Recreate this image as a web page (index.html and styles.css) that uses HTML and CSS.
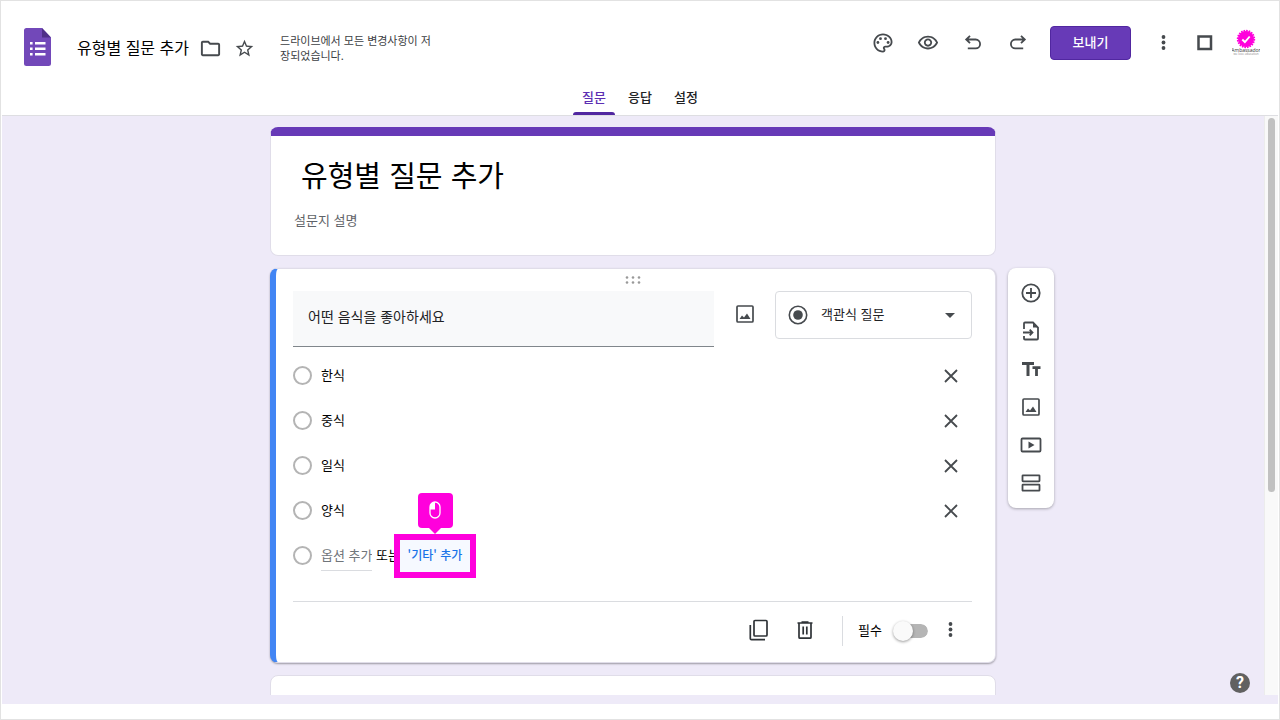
FILE: index.html
```html
<!DOCTYPE html>
<html lang="ko">
<head>
<meta charset="utf-8">
<meta name="viewport" content="width=device-width, initial-scale=1">
<title>유형별 질문 추가</title>
<link rel="stylesheet" href="styles.css">
</head>
<body>
<header class="header">
  <div class="topbar">
    <div class="doc">
      <svg class="logo" viewBox="0 0 27 38" aria-hidden="true">
        <path d="M2.500 0H18l9 9.500V35.500a2.500 2.500 0 0 1-2.500 2.500h-22A2.500 2.500 0 0 1 0 35.500v-33A2.500 2.500 0 0 1 2.500 0z" fill="#7248b9"/>
        <path d="M18 0l9 9.500h-9z" fill="#4f2f88"/>
        <path d="M11 14h10.500v2.500H11zM11 19.500h10.500V22H11zM11 25h10.500v2.500H11zM6 14h2.600v2.500H6zM6 19.500h2.600V22H6zM6 25h2.600v2.500H6z" fill="#fff"/>
      </svg>
      <h1 class="doc-name">유형별 질문 추가</h1>
      <button class="plain" aria-label="이동"><svg class="i23" viewBox="0 0 24 24"><path d="M9.170 6l2 2H20v10H4V6h5.170M10 4H4c-1.100 0-2 .9-2 2v12c0 1.100.9 2 2 2h16c1.100 0 2-.9 2-2V8c0-1.100-.9-2-2-2h-8l-2-2z"/></svg></button>
      <button class="plain star" aria-label="별표"><svg class="i21" viewBox="0 0 24 24"><path d="M22 9.240l-7.190-.62L12 2 9.190 8.630 2 9.240l5.460 4.730L5.820 21 12 17.270 18.180 21l-1.630-7.030L22 9.240zM12 15.400l-3.760 2.270 1-4.280-3.320-2.880 4.380-.38L12 6.100l1.710 4.040 4.380.38-3.320 2.880 1 4.280L12 15.400z"/></svg></button>
      <p class="status">드라이브에서 모든 변경사항이 저장되었습니다.</p>
    </div>
    <div class="actions">
      <button class="icon-btn" aria-label="테마 맞춤설정"><svg class="i24" viewBox="0 0 24 24"><path d="M12 21.500C6.760 21.500 2.500 17.240 2.500 12S6.760 2.500 12 2.500s9.500 3.820 9.500 8.500c0 3-2.500 5.500-5.500 5.500h-1.800c-.3 0-.5.2-.5.5 0 .1.050.2.130.3.400.5.650 1.080.650 1.700 0 1.400-1.100 2.500-2.480 2.500zM12 4.300c-4.240 0-7.700 3.450-7.700 7.700s3.460 7.700 7.700 7.700c.4 0 .65-.3.650-.7 0-.2-.1-.36-.17-.44-.4-.46-.62-1.020-.62-1.610 0-1.300 1.050-2.250 2.350-2.250H16c2.050 0 3.700-1.660 3.700-3.700 0-3.700-3.460-6.700-7.700-6.700z"/><circle cx="6.900" cy="11.500" r="1.400"/><circle cx="9.500" cy="7.700" r="1.400"/><circle cx="14.500" cy="7.700" r="1.400"/><circle cx="17.100" cy="11.500" r="1.400"/></svg></button>
      <button class="icon-btn" aria-label="미리보기"><svg class="i22" viewBox="0 0 24 24"><path d="M12 6c3.790 0 7.170 2.130 8.820 5.500C19.170 14.870 15.790 17 12 17s-7.170-2.130-8.820-5.500C4.830 8.130 8.210 6 12 6m0-2C7 4 2.730 7.110 1 11.500 2.730 15.890 7 19 12 19s9.270-3.110 11-7.500C21.270 7.110 17 4 12 4zm0 5c1.380 0 2.500 1.120 2.500 2.500S13.380 14 12 14s-2.500-1.120-2.500-2.500S10.620 9 12 9m0-2c-2.480 0-4.500 2.020-4.500 4.500S9.520 16 12 16s4.500-2.020 4.500-4.500S14.480 7 12 7z"/></svg></button>
      <button class="icon-btn" aria-label="실행취소"><svg class="i22 line" viewBox="0 0 22 22"><path d="M8 3.800L4.200 7.500 8 11.200M4.500 7.500h9.200a4.400 4.400 0 0 1 0 8.800H5.800"/></svg></button>
      <button class="icon-btn" aria-label="재실행"><svg class="i22 line" viewBox="0 0 22 22"><path d="M14 3.800l3.800 3.700-3.800 3.700M17.500 7.500H8.300a4.400 4.400 0 0 0 0 8.800h7.900"/></svg></button>
      <button class="send">보내기</button>
      <button class="icon-btn small" aria-label="더보기"><svg class="i22" viewBox="0 0 22 22"><circle cx="10.500" cy="5" r="1.900"/><circle cx="10.500" cy="10.500" r="1.900"/><circle cx="10.500" cy="16" r="1.900"/></svg></button>
      <button class="icon-btn small" aria-label="앱"><svg class="i22" viewBox="0 0 22 22"><path d="M4.500 4.500h12.500v12.500H4.500z" fill="none" stroke="#464a4e" stroke-width="2.500"/></svg></button>
      <button class="avatar" aria-label="Google 계정">
        <svg viewBox="0 0 28 28">
          <circle cx="14" cy="10" r="8" fill="#ff00dc"/>
          <circle cx="14" cy="10" r="8.300" fill="none" stroke="#ff00dc" stroke-width="1.800" stroke-dasharray="1.600 1"/>
          <path d="M10.300 10.500l2.600 2.500 4.800-5.500" fill="none" stroke="#fff" stroke-width="1.900"/>
          <text class="avatar-name" x="14" y="23" text-anchor="middle">Ambassador</text>
          <text class="avatar-sub" x="14" y="26" text-anchor="middle">we love education</text>
        </svg>
      </button>
    </div>
  </div>
  <nav class="tabs">
    <a class="tab active" href="#questions">질문</a>
    <a class="tab" href="#responses">응답</a>
    <a class="tab" href="#settings">설정</a>
  </nav>
</header>

<main class="workspace">
  <div class="viewport">
    <div class="canvas" id="questions">
      <section class="card intro">
        <h2 class="form-title">유형별 질문 추가</h2>
        <p class="form-desc">설문지 설명</p>
      </section>

      <section class="card question">
        <svg class="grip" viewBox="0 0 16 8" aria-hidden="true"><circle cx="2" cy="1.500" r="1.300"/><circle cx="8" cy="1.500" r="1.300"/><circle cx="14" cy="1.500" r="1.300"/><circle cx="2" cy="6.500" r="1.300"/><circle cx="8" cy="6.500" r="1.300"/><circle cx="14" cy="6.500" r="1.300"/></svg>
        <div class="question-head">
          <input class="question-text" type="text" value="어떤 음식을 좋아하세요" aria-label="질문">
          <button class="image-btn" aria-label="이미지 추가"><svg class="i22" viewBox="0 0 22 22"><rect x="3" y="3" width="16" height="16" rx="1" fill="none" stroke="#464a4e" stroke-width="1.700"/><path d="M5.500 16l2.500-3.500 2 2 3-4 3.500 5.500z"/></svg></button>
          <div class="type">
            <svg class="type-icon" viewBox="0 0 20 20" aria-hidden="true"><circle cx="10" cy="10" r="8.700" fill="none" stroke="#464a4e" stroke-width="1.600"/><circle cx="10" cy="10" r="4.800"/></svg>
            <select class="type-select" aria-label="질문 유형"><option>객관식 질문</option></select>
            <svg class="type-arrow" viewBox="0 0 10 5" aria-hidden="true"><path d="M0 0h10L5 5z"/></svg>
          </div>
        </div>

        <ul class="options">
          <li class="option">
            <input class="radio" type="radio" name="food" id="o1"><label for="o1">한식</label>
            <button class="row-btn" aria-label="한식 삭제"><svg class="i22 line" viewBox="0 0 22 22"><path d="M5 5l12 12M17 5L5 17"/></svg></button>
          </li>
          <li class="option">
            <input class="radio" type="radio" name="food" id="o2"><label for="o2">중식</label>
            <button class="row-btn" aria-label="중식 삭제"><svg class="i22 line" viewBox="0 0 22 22"><path d="M5 5l12 12M17 5L5 17"/></svg></button>
          </li>
          <li class="option">
            <input class="radio" type="radio" name="food" id="o3"><label for="o3">일식</label>
            <button class="row-btn" aria-label="일식 삭제"><svg class="i22 line" viewBox="0 0 22 22"><path d="M5 5l12 12M17 5L5 17"/></svg></button>
          </li>
          <li class="option">
            <input class="radio" type="radio" name="food" id="o4"><label for="o4">양식</label>
            <button class="row-btn" aria-label="양식 삭제"><svg class="i22 line" viewBox="0 0 22 22"><path d="M5 5l12 12M17 5L5 17"/></svg></button>
          </li>
          <li class="option">
            <input class="radio" type="radio" name="food" aria-label="새 옵션">
            <input class="add-option" type="text" placeholder="옵션 추가" aria-label="옵션 추가">
            <span class="or">또는</span>
            <div class="other">
              <button class="other-btn">'기타' 추가</button>
              <span class="highlight"></span>
              <span class="callout">
                <svg viewBox="0 0 12 18" aria-hidden="true"><rect x="1" y="1" width="10" height="16" rx="5" fill="none" stroke="#fff" stroke-width="1.300"/><path d="M6 1v7.500H1V6a5 5 0 0 1 5-5z" fill="#fff"/></svg>
              </span>
            </div>
          </li>
        </ul>

        <div class="question-foot">
          <button class="foot-btn" aria-label="사본 만들기"><svg class="i22" viewBox="0 0 22 22"><g fill="none" stroke="#2f3337" stroke-width="1.700"><rect x="6" y="1.500" width="13" height="15.500" rx="1"/><path d="M2.300 6v13.500a1.200 1.200 0 0 0 1.200 1.200H17"/></g></svg></button>
          <button class="foot-btn" aria-label="삭제"><svg class="i22" viewBox="0 0 22 22"><g fill="none" stroke="#2f3337" stroke-width="1.700"><path d="M5 4.500v13.700a1 1 0 0 0 1 1h10a1 1 0 0 0 1-1V4.500M3.500 4h15M7.500 3h7M9.200 7.500v8M12.800 7.500v8"/></g></svg></button>
          <label class="required"><span>필수</span><input class="toggle" type="checkbox"></label>
          <button class="row-btn" aria-label="옵션 더보기"><svg class="i22" viewBox="0 0 22 22"><circle cx="10.500" cy="5" r="1.900"/><circle cx="10.500" cy="10.500" r="1.900"/><circle cx="10.500" cy="16" r="1.900"/></svg></button>
        </div>
      </section>

      <aside class="tools">
        <button aria-label="질문 추가"><svg class="i22 line" viewBox="0 0 22 22"><circle cx="11" cy="11" r="8.700"/><path d="M11 6v10M6 11h10"/></svg></button>
        <button aria-label="질문 가져오기"><svg class="i22 line" viewBox="0 0 22 22"><path d="M4 9V3.500a1 1 0 0 1 1-1h8l5 5v11a1 1 0 0 1-1 1H5a1 1 0 0 1-1-1V16M3 12.500h9M9.700 9.700l2.800 2.800-2.800 2.800"/><path d="M13 2.500v5h5z" fill="#464a4e" stroke="none"/></svg></button>
        <button aria-label="제목 및 설명 추가"><svg class="i22" viewBox="0 0 22 22"><path d="M2 4h12v2.900H9.500V18H6.500V6.900H2zM12.500 8.300H20.500V11h-2.600v7h-2.800v-7h-2.600z"/></svg></button>
        <button aria-label="이미지 추가"><svg class="i22" viewBox="0 0 22 22"><rect x="3" y="3" width="16" height="16" rx="1" fill="none" stroke="#464a4e" stroke-width="1.700"/><path d="M5.500 16l2.500-3.500 2 2 3-4 3.500 5.500z"/></svg></button>
        <button aria-label="동영상 추가"><svg class="i22 line" viewBox="0 0 22 22"><rect x="1.500" y="4.500" width="19" height="13" rx="1"/><path d="M8.500 7.500v7l6-3.500z" fill="#464a4e" stroke="none"/></svg></button>
        <button aria-label="섹션 추가"><svg class="i22 line" viewBox="0 0 22 22"><rect x="2.500" y="3.300" width="17" height="6" rx=".5"/><rect x="2.500" y="12.700" width="17" height="6" rx=".5"/></svg></button>
      </aside>

      <section class="card next"></section>
    </div>
    <div class="scrollbar"><div class="thumb"></div></div>
  </div>
  <button class="help" aria-label="도움말">?</button>
</main>
</body>
</html>
```

FILE: styles.css
```css
* {
  box-sizing: border-box;
}

body {
  margin: 0;
  height: 100vh;
  padding: 0 1px 15px;
  border: 1px solid #e2e2e2;
  display: flex;
  flex-direction: column;
  overflow: hidden;
  background: #fff;
  color: #202124;
  font-family: "Noto Sans CJK KR", sans-serif;
  font-size: 13px;
  line-height: 20px;
}

h1, h2, p, ul {
  margin: 0;
  padding: 0;
  font-weight: 400;
}

button, input, select {
  margin: 0;
  padding: 0;
  border: 0;
  background: none;
  color: inherit;
  font: inherit;
}

button {
  display: flex;
  align-items: center;
  justify-content: center;
  cursor: pointer;
}

svg {
  display: block;
  fill: #464a4e;
}

.line {
  fill: none;
  stroke: #464a4e;
  stroke-width: 1.8;
}

.i21 { width: 21px; height: 21px; }
.i22 { width: 22px; height: 22px; }
.i23 { width: 23px; height: 23px; }
.i24 { width: 24px; height: 24px; }

/* Header */

.header {
  flex: none;
  border-bottom: 1px solid #dedee2;
}

.topbar {
  display: flex;
  justify-content: space-between;
  height: 78px;
  padding: 0 18px 0 22px;
}

.doc {
  display: flex;
  align-items: center;
  padding-top: 16px;
}

.logo {
  width: 27px;
  height: 38px;
  margin: 0 26px 2px 0;
}

.doc-name {
  margin: 0 10px 2px 0;
  font-size: 16px;
  line-height: 24px;
  color: #000;
}

.star {
  margin-left: 12px;
}

.status {
  width: 154px;
  margin-left: 25px;
  font-size: 11px;
  line-height: 15px;
  color: #3c4043;
}

.actions {
  display: flex;
  align-items: center;
  padding-top: 6px;
}

.icon-btn {
  width: 45px;
  height: 40px;
}

.icon-btn.small {
  width: 41px;
}

.send {
  width: 81px;
  height: 34px;
  margin: 0 12px 0 10px;
  padding-bottom: 2px;
  border: 1px solid #5127a0;
  border-radius: 4px;
  background: #673ab7;
  color: #fff;
  font-weight: 500;
}

.avatar {
  width: 28px;
  height: 28px;
  margin-left: 7px;
}

.avatar svg {
  width: 28px;
  height: 28px;
}

.avatar-name {
  font: 5px "Open Sans", sans-serif;
  fill: #333;
}

.avatar-sub {
  font: 3px "Open Sans", sans-serif;
  fill: #888;
}

.tabs {
  display: flex;
  justify-content: center;
  gap: 4px;
  height: 36px;
}

.tab {
  width: 42px;
  padding-top: 8px;
  text-align: center;
  text-decoration: none;
  font-weight: 500;
  color: #202124;
  position: relative;
}

.tab.active {
  color: #5d2fb3;
}

.tab.active::after {
  content: "";
  position: absolute;
  right: 0;
  bottom: 0;
  left: 0;
  height: 3px;
  border-radius: 3px 3px 0 0;
  background: #5127a0;
}

/* Workspace */

.workspace {
  flex: 1;
  min-height: 0;
  display: flex;
  flex-direction: column;
  padding-bottom: 9px;
  position: relative;
  background: #eeeaf8;
}

.viewport {
  flex: 1;
  min-height: 0;
  display: flex;
  overflow: hidden;
}

.canvas {
  flex: 1;
  display: grid;
  grid-template-columns: 1fr minmax(0, 726px) 1fr;
  align-content: start;
  gap: 12px;
  padding-top: 11px;
}

.scrollbar {
  flex: none;
  width: 14px;
  padding: 2px 3px;
  border-left: 1px solid #ececec;
  background: #f9f9f9;
}

.thumb {
  height: 65%;
  border-radius: 4px;
  background: #c1c1c1;
}

.card {
  grid-column: 2;
  border: 1px solid #e0dde9;
  border-radius: 8px;
  background: #fff;
}

.intro {
  padding: 16px 23px 25px;
  border-top: 9px solid #673ab7;
}

.form-title {
  padding: 0 7px;
  font-size: 29px;
  line-height: 44px;
  color: #000;
}

.form-desc {
  margin-top: 14px;
  color: #5f6368;
}

.question {
  padding: 7px 23px 12px 17px;
  border-left: 6px solid #4285f4;
  box-shadow: 0 1px 2px rgba(0, 0, 0, .35);
}

.grip {
  width: 16px;
  height: 8px;
  margin: 0 auto;
  fill: #999;
}

.question-head {
  display: flex;
  align-items: flex-start;
  padding-top: 7px;
}

.question-text {
  flex: 1;
  min-width: 0;
  height: 56px;
  padding: 0 15px 5px;
  border-bottom: 1px solid #80868b;
  background: #f8f9fa;
  font-size: 14px;
}

.image-btn {
  width: 61px;
  height: 46px;
}

.type {
  flex: none;
  display: flex;
  align-items: center;
  width: 197px;
  height: 48px;
  padding: 0 16px 0 12px;
  border: 1px solid #dadce0;
  border-radius: 4px;
}

.type-icon {
  width: 20px;
  height: 20px;
}

.type-select {
  flex: 1;
  min-width: 0;
  height: 44px;
  padding: 0 0 2px 13px;
  appearance: none;
}

.type-arrow {
  width: 10px;
  height: 5px;
}

.options {
  padding-top: 6px;
  list-style: none;
}

.option {
  display: flex;
  align-items: center;
  height: 45px;
}

.option label {
  flex: 1;
  padding-bottom: 2px;
  color: #000;
}

.radio {
  flex: none;
  width: 19px;
  height: 19px;
  margin-right: 9px;
  border: 2px solid #b4b4b4;
  border-radius: 50%;
  appearance: none;
}

.row-btn {
  width: 42px;
  height: 40px;
}

.add-option {
  width: 51px;
  height: 30px;
  padding-bottom: 2px;
  border-bottom: 1px solid #dadce0;
}

.add-option::placeholder {
  color: #70757a;
  opacity: 1;
}

.or {
  padding: 0 0 2px 4px;
  color: #000;
}

.other {
  position: relative;
}

.other-btn {
  width: 70px;
  height: 32px;
  padding-bottom: 2px;
  background: #f6f9ff;
  color: #1a73e8;
  font-size: 12px;
  font-weight: 500;
}

/* Tutorial marker laid over the link */

.highlight {
  position: absolute;
  inset: -6px;
  border: 6px solid #ff00dc;
  pointer-events: none;
}

.callout {
  position: absolute;
  bottom: 44px;
  left: calc(50% - 17px);
  display: flex;
  align-items: center;
  justify-content: center;
  width: 35px;
  height: 35px;
  border-radius: 4px;
  background: #ff00dc;
}

.callout::after {
  content: "";
  position: absolute;
  top: 100%;
  left: calc(50% - 6px);
  border: 6px solid transparent;
  border-top-color: #ff00dc;
  border-bottom: 0;
}

.callout svg {
  width: 12px;
  height: 18px;
}

.question-foot {
  display: flex;
  align-items: center;
  justify-content: flex-end;
  margin-top: 23px;
  padding-top: 8px;
  border-top: 1px solid #dadce0;
}

.foot-btn {
  width: 46px;
  height: 40px;
}

.required {
  display: flex;
  align-items: center;
  gap: 11px;
  height: 30px;
  margin: 2px 2px 0 14px;
  padding-left: 15px;
  border-left: 1px solid #dadce0;
  color: #000;
}

.required span {
  padding-bottom: 2px;
}

.toggle {
  width: 35px;
  height: 14px;
  border-left: 3px solid transparent;
  border-radius: 7px;
  background: #b5b5b5;
  background-clip: padding-box;
  position: relative;
  appearance: none;
}

.toggle::before {
  content: "";
  position: absolute;
  top: -3px;
  left: -3px;
  width: 20px;
  height: 20px;
  border-radius: 50%;
  background: #fafafa;
  box-shadow: 0 1px 3px rgba(0, 0, 0, .4);
}

.tools {
  grid-column: 3;
  grid-row: 2;
  align-self: start;
  width: 46px;
  padding: 6px 0;
  border-radius: 8px;
  background: #fff;
  box-shadow: 0 1px 3px rgba(0, 0, 0, .3);
}

.tools button {
  width: 46px;
  height: 38px;
}

.next {
  height: 80px;
}

.help {
  position: absolute;
  right: 28px;
  bottom: 11px;
  width: 20px;
  height: 20px;
  border-radius: 50%;
  background: #616161;
  color: #fff;
  font: 700 16px/20px Roboto, sans-serif;
}
```
